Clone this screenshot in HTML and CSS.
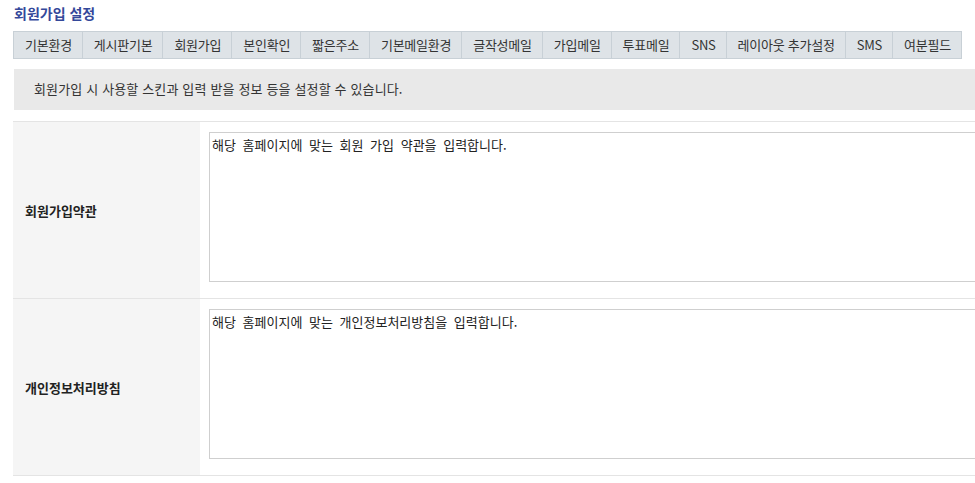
FILE: index.html
```html
<!DOCTYPE html>
<html lang="ko">
<head>
<meta charset="utf-8">
<title>회원가입 설정</title>
<link rel="stylesheet" href="styles.css">
</head>
<body>
<div class="page">
  <h2 class="title">회원가입 설정</h2>
  <ul class="tabs">
    <li>기본환경</li>
    <li>게시판기본</li>
    <li>회원가입</li>
    <li>본인확인</li>
    <li>짧은주소</li>
    <li>기본메일환경</li>
    <li>글작성메일</li>
    <li>가입메일</li>
    <li>투표메일</li>
    <li>SNS</li>
    <li>레이아웃 추가설정</li>
    <li>SMS</li>
    <li>여분필드</li>
  </ul>
  <div class="info">회원가입 시 사용할 스킨과 입력 받을 정보 등을 설정할 수 있습니다.</div>
  <table class="form">
    <colgroup>
      <col class="col-th">
      <col>
    </colgroup>
    <tr>
      <th>회원가입약관</th>
      <td><textarea>해당 홈페이지에 맞는 회원 가입 약관을 입력합니다.</textarea></td>
    </tr>
    <tr>
      <th>개인정보처리방침</th>
      <td><textarea>해당 홈페이지에 맞는 개인정보처리방침을 입력합니다.</textarea></td>
    </tr>
  </table>
</div>
</body>
</html>
```
FILE: styles.css
```css
html, body {
  margin: 0;
  padding: 0;
  overflow: hidden;
  background: #fff;
}
body {
  font-family: "Noto Sans CJK KR", "Noto Sans", sans-serif;
  font-size: 12px;
  color: #333;
}
.page {
  width: 1010px;
  padding: 4px 0 0 13px;
}
.title {
  margin: 0 0 0 1px;
  height: 20px;
  line-height: 18px;
  font-size: 14px;
  font-weight: bold;
  color: #34489a;
}
.tabs {
  display: flex;
  list-style: none;
  margin: 7px 0 0;
  padding: 0;
}
.tabs li {
  height: 26px;
  line-height: 26px;
  padding: 0 10px 0 11px;
  background: #dee3e7;
  border: 1px solid #c8d0d6;
  border-left: 0;
  color: #333;
  font-size: 13px;
  letter-spacing: -0.25px;
  white-space: nowrap;
}
.tabs li:first-child {
  border-left: 1px solid #c8d0d6;
}
.info {
  margin: 10px 0 0 1px;
  height: 41px;
  line-height: 40px;
  padding: 0 20px;
  background: #e9e9e9;
  color: #333;
  font-size: 13px;
  letter-spacing: 0.15px;
}
.form {
  margin-top: 11px;
  width: 1000px;
  border-collapse: collapse;
  table-layout: fixed;
}
.col-th {
  width: 187px;
}
.form th,
.form td {
  border-top: 1px solid #e4e4e4;
  border-bottom: 1px solid #e4e4e4;
}
.form th {
  padding: 0 0 0 12px;
  background: #f5f5f5;
  text-align: left;
  font-size: 13px;
  font-weight: bold;
  color: #222;
}
.form td {
  padding: 10px 0 10px 9px;
}
.form textarea {
  display: block;
  box-sizing: border-box;
  width: 900px;
  height: 150px;
  margin: 0 0 6px;
  padding: 4px 2px;
  border: 1px solid #cfcfcf;
  font-family: "Noto Sans CJK KR", sans-serif;
  font-size: 13px;
  line-height: 15px;
  word-spacing: 3px;
  color: #222;
  resize: none;
}
```
